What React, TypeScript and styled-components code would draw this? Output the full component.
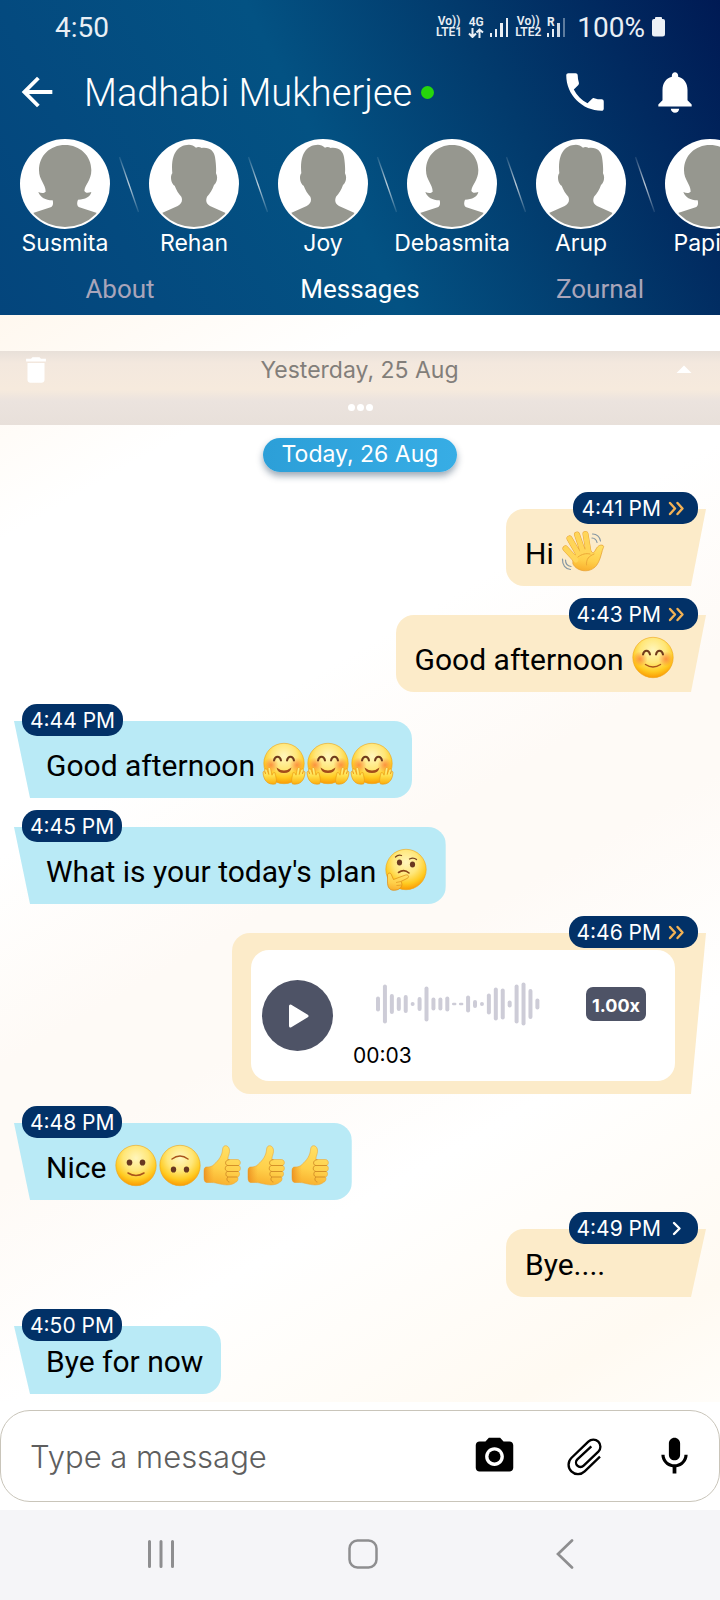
import React from "react";
import styled, { createGlobalStyle, css } from "styled-components";
import {
  MdArrowBack,
  MdArrowDropUp,
  MdDelete,
  MdNotifications,
  MdPhone,
  MdPhotoCamera,
} from "react-icons/md";

const GlobalStyle = createGlobalStyle`
  * { box-sizing: border-box; }
  body { margin: 0; background: #ffffff; font-family: Roboto, "Liberation Sans", sans-serif; }
  button { border: 0; padding: 0; background: none; color: inherit; font: inherit; cursor: pointer; }
  svg { display: block; flex: none; }
`;

const labelFont = `Inter, "Liberation Sans", sans-serif`;

/* ---------- Page ---------- */

const Page = styled.div`
  display: flex;
  flex-direction: column;
  min-height: 100vh;
  overflow-x: hidden;
`;

const Header = styled.header`
  color: #ffffff;
  background: linear-gradient(63deg, #04457c 0%, #044a7f 18%, #035283 46%, #023a6c 70%, #001a54 100%);
`;

const StatusBar = styled.div`
  display: flex;
  align-items: center;
  justify-content: space-between;
  height: 54px;
  padding: 0 54px 0 55px;
  font-size: 28px;
  color: #e9eff5;
`;

const StatusIcons = styled.div`
  display: flex;
  align-items: center;
  gap: 6px;
`;

const StatusStack = styled.span`
  display: flex;
  flex-direction: column;
  align-items: center;
  font-size: 12px;
  line-height: 11px;
  font-weight: 600;
`;

const BatteryText = styled.span`
  padding-left: 5px;
`;

const TitleBar = styled.div`
  display: flex;
  align-items: center;
  height: 76px;
  padding: 0 20px 0 14px;
`;

const ContactName = styled.h1`
  margin: 0 9px 0 24px;
  padding-top: 2px;
  font-size: 38px;
  line-height: 44px;
  font-weight: 300;
  white-space: nowrap;
`;

const OnlineDot = styled.span`
  width: 13px;
  height: 13px;
  border-radius: 50%;
  background: #26d60c;
`;

const TitleActions = styled.div`
  display: flex;
  gap: 40px;
  margin-left: auto;
`;

const IconButton = styled.button`
  display: flex;
  align-items: center;
  justify-content: center;
`;

const Contacts = styled.div`
  display: flex;
  padding: 9px 0 0 20px;
  overflow: hidden;
`;

const Contact = styled.button`
  display: flex;
  flex: none;
  flex-direction: column;
  align-items: center;
  width: 90px;
  font-family: ${labelFont};
  font-size: 23px;
  line-height: 28px;
  white-space: nowrap;
`;

const Tabs = styled.nav`
  display: grid;
  grid-template-columns: repeat(3, 1fr);
  height: 58px;
  padding-top: 6px;
`;

const Tab = styled.button<{ $active?: boolean }>`
  font-size: 26px;
  line-height: 32px;
  color: ${(p) => (p.$active ? "#ffffff" : "#a9a5ba")};
`;

/* ---------- Conversation ---------- */

const Chat = styled.main`
  flex: 1;
  padding: 36px 0 8px;
  background: linear-gradient(
    150deg,
    #fff8ef 0%,
    #ffffff 15%,
    #ffffff 36%,
    #fefaf6 50%,
    #fefaf6 58%,
    #ffffff 73%,
    #fffaf2 92%,
    #fffdf9 100%
  );
`;

const Earlier = styled.section`
  height: 74px;
  background: linear-gradient(#e8e0d9 0%, #f3e8de 16%, #f6eadd 52%, #ebe3de 68%, #e8e0da 100%);
`;

const DayToggle = styled.button`
  display: grid;
  grid-template-columns: 34px 1fr 34px;
  align-items: center;
  width: 100%;
  height: 38px;
  padding: 0 20px 0 19px;
  font-family: ${labelFont};
  font-size: 23px;
  color: #827e7a;

  svg { color: #ffffff; }
`;

const MoreDots = styled.button`
  display: flex;
  align-items: center;
  justify-content: center;
  gap: 2px;
  width: 100%;
  height: 36px;
`;

const Dot = styled.span`
  width: 7px;
  height: 7px;
  border-radius: 50%;
  background: #ffffff;
`;

const Today = styled.div`
  width: fit-content;
  height: 34px;
  margin: 13px auto 20px;
  padding: 0 19px;
  border-radius: 17px;
  background: linear-gradient(90deg, #2c9fd8, #37ade5);
  box-shadow: 0 4px 7px rgba(20, 50, 80, 0.42);
  font-family: ${labelFont};
  font-size: 23px;
  line-height: 32px;
  color: #ffffff;
`;

const Messages = styled.ol`
  display: flex;
  flex-direction: column;
  gap: 12px;
  margin: 0;
  padding: 0;
  list-style: none;
`;

const MessageRow = styled.li<{ $mine: boolean }>`
  display: flex;
  flex-direction: column;
  align-items: ${(p) => (p.$mine ? "flex-end" : "flex-start")};
`;

const Stamp = styled.div`
  position: relative;
  z-index: 1;
  display: flex;
  align-items: center;
  gap: 5px;
  height: 32px;
  margin: 0 22px -15px;
  padding: 0 8px;
  border-radius: 15px;
  background: #023167;
  font-family: ${labelFont};
  font-size: 21px;
  color: #ffffff;
`;

const mineShape = css`
  min-width: 200px;
  padding-left: 19px;
  padding-right: 31px;
  border-radius: 18px 0 0 18px;
  background: #fcebc9;
  clip-path: polygon(0 0, 100% 0, calc(100% - 15px) 100%, 0 100%);
`;

const theirsShape = css`
  padding-left: 32px;
  padding-right: 18px;
  border-radius: 0 18px 18px 0;
  background: #b9eaf6;
  clip-path: polygon(0 0, 100% 0, 100% 100%, 16px 100%);
`;

const Bubble = styled.div<{ $mine: boolean }>`
  display: flex;
  align-items: flex-end;
  margin: 0 14px;
  padding-top: 17px;
  padding-bottom: 13px;
  font-size: 30px;
  line-height: 38px;
  color: #000000;
  ${(p) => (p.$mine ? mineShape : theirsShape)}
`;

const BubbleText = styled.span`
  white-space: pre-wrap;
`;

const EmojiRun = styled.span`
  display: flex;
  padding-top: 3px;
`;

const Player = styled.div`
  display: flex;
  align-items: center;
  width: 424px;
  height: 131px;
  padding: 0 29px 0 11px;
  border-radius: 18px;
  background: #ffffff;
`;

const PlayButton = styled(IconButton)`
  flex: none;
  width: 71px;
  height: 71px;
  border-radius: 50%;
  background: #4e5366;
`;

const Track = styled.div`
  flex: 1;
  align-self: flex-start;
  padding: 32px 0 0 20px;
`;

const TrackTop = styled.div`
  display: flex;
  align-items: center;
  justify-content: space-between;
  padding-left: 22px;
`;

const Speed = styled.button`
  width: 60px;
  height: 34px;
  border-radius: 7px;
  background: #4e5366;
  font-family: ${labelFont};
  font-size: 18px;
  font-weight: 700;
  color: #ffffff;
`;

const Elapsed = styled.div`
  margin-top: 16px;
  font-family: ${labelFont};
  font-size: 21px;
  line-height: 28px;
`;

/* ---------- Composer and system navigation ---------- */

const Composer = styled.form`
  padding: 8px 0;
  background: #ffffff;
`;

const ComposerBox = styled.div`
  display: flex;
  align-items: center;
  height: 92px;
  padding: 0 22px 0 29px;
  border: 1px solid #c9c5ba;
  border-radius: 30px;
`;

const MessageInput = styled.input`
  flex: 1;
  min-width: 0;
  padding: 0;
  border: 0;
  outline: 0;
  background: none;
  font-family: ${labelFont};
  font-size: 31px;
  font-weight: 300;
  color: #000000;

  &::placeholder { color: #5e5e5e; opacity: 1; }
`;

const ComposerActions = styled.div`
  display: flex;
  gap: 45px;
`;

const SystemNav = styled.nav`
  display: grid;
  grid-template-columns: repeat(3, 1fr);
  height: 90px;
  padding: 0 54px 2px 60px;
  background: #f5f5f8;
`;

/* ---------- Drawings ---------- */

const Signal = ({ weak }: { weak?: boolean }) => (
  <svg width="19" height="22" viewBox="0 0 19 22" fill="#e9eff5" aria-hidden="true">
    <rect x="0" y="17" width="2" height="4" />
    <rect x="5" y="13" width="2" height="8" />
    <rect x="10" y="7" width="3" height="14" opacity={weak ? 0.9 : 1} />
    <rect x="16" y="2" width="2" height="19" opacity={weak ? 0.4 : 1} />
    {weak && (
      <text x="0" y="10" fontSize="12" fontWeight="700">
        R
      </text>
    )}
  </svg>
);

const DataArrows = () => (
  <svg width="16" height="10" viewBox="0 0 16 10" fill="none" stroke="#e9eff5" strokeWidth="2" aria-hidden="true">
    <path d="M4.500 0V8.500M1 5.500l3.500 3.500L8 5.500M11.500 10V1.500M8.500 4.500l3-3 3.500 3" />
  </svg>
);

const Battery = () => (
  <svg width="15" height="20" viewBox="0 0 15 20" fill="#edf1f6" aria-hidden="true">
    <path d="M4 2V1a1 1 0 0 1 1-1h5a1 1 0 0 1 1 1v1h1a2 2 0 0 1 2 2v13a2.500 2.500 0 0 1-2.500 2.500h-8A2.500 2.500 0 0 1 1 17V4a2 2 0 0 1 2-2z" />
  </svg>
);

const silhouettes = {
  woman:
    "M135 18c45 0 79 32 79 76 0 29-18 42-21 61 4 9 12 6 21 4-3 14-18 23-40 23-5 13-2 20 4 23l53 17v60H39v-60l53-17c6-3 9-10 6-21-22 0-37-9-43-25 8 3 16 5 22-1 0-22-20-35-20-64 0-44 33-76 78-76z",
  man:
    "M108 19c14-4 24-1 33 7 5-3 12-2 17 1 24-3 37 9 40 27 3 19 4 34 3 49 7 12 2 30-6 35-5 16-12 25-21 35-5 13-2 22 9 28l47 21v61H39v-61l47-21c11-6 16-16 11-28-9-10-15-20-20-33-10-5-15-28-7-37-2-20-1-38 4-52 6-16 17-28 34-32z",
};

const Avatar = ({ kind }: { kind: keyof typeof silhouettes }) => (
  <svg width="90" height="90" viewBox="0 0 270 270" aria-hidden="true">
    <clipPath id={`ring-${kind}`}>
      <circle cx="135" cy="135" r="129" />
    </clipPath>
    <circle cx="135" cy="135" r="135" fill="#ffffff" />
    <path d={silhouettes[kind]} fill="#96978f" clipPath={`url(#ring-${kind})`} />
  </svg>
);

const Slash = () => (
  <svg width="39" height="90" viewBox="0 0 39 90" aria-hidden="true">
    <defs>
      <linearGradient id="slash" x1="0" y1="0" x2="0" y2="1">
        <stop offset="0" stopColor="#ffffff" stopOpacity="0.1" />
        <stop offset="0.5" stopColor="#ffffff" stopOpacity="0.75" />
        <stop offset="1" stopColor="#ffffff" stopOpacity="0.1" />
      </linearGradient>
    </defs>
    <path d="M9.500 18 28.500 73" stroke="url(#slash)" strokeWidth="1.300" />
  </svg>
);

const ReadTicks = ({ read }: { read: boolean }) => (
  <svg width="24" height="16" viewBox="0 0 24 16" fill="none" strokeWidth="2.400" strokeLinecap="round" strokeLinejoin="round" aria-hidden="true">
    {read ? (
      <path d="m4 3 5 5.500-5 5.500M11.500 3l5 5.500-5 5.500" stroke="#f3b255" />
    ) : (
      <path d="m8 3 5.500 5.500-5.500 5.500" stroke="#ffffff" />
    )}
  </svg>
);

const bars = [15, 39, 20, 14, 18, 4, 14, 35, 13, 13, 15, 2, 2, 17, 8, 4, 21, 33, 31, 7, 39, 43, 30, 11];

const Waveform = () => (
  <svg width="166" height="44" viewBox="0 0 166 44" stroke="#cdccd7" aria-hidden="true">
    {bars.map((h, i) => {
      const x = 3 + i * 6.93;
      return h === 2 ? (
        <path key={i} d={`M${x - 1} 22h2`} strokeWidth="2.400" strokeLinecap="round" />
      ) : (
        <path key={i} d={`M${x} ${22 - h / 2 + 2}v${h - 4 + 0.01}`} strokeWidth="4" strokeLinecap="round" />
      );
    })}
  </svg>
);

const Paperclip = () => (
  <svg width="45" height="45" viewBox="0 0 135 135" fill="none" stroke="#000000" strokeWidth="7" aria-hidden="true">
    <path d="M114 68 68 112a28 28 0 0 1-40-40L79 23a21 21 0 0 1 30 30L65 95a13 13 0 0 1-19-19L88 37" />
  </svg>
);

const Microphone = () => (
  <svg width="45" height="45" viewBox="0 0 24 24" aria-hidden="true">
    <path d="M12 14c1.660 0 2.990-1.340 2.990-3L15 5c0-1.660-1.340-3-3-3S9 3.340 9 5v6c0 1.660 1.340 3 3 3zm5.300-3c0 3-2.540 5.100-5.300 5.100S6.700 14 6.700 11H5c0 3.410 2.720 6.230 6 6.720V21h2v-3.280c3.280-.48 6-3.300 6-6.720h-1.700z" />
  </svg>
);

/* ---------- Emoji ---------- */

type EmojiName = "wave" | "blush" | "hug" | "think" | "smile" | "flipped" | "thumb";

const emojiGlyph: Record<EmojiName, string> = {
  wave: "👋",
  blush: "😊",
  hug: "🤗",
  think: "🤔",
  smile: "🙂",
  flipped: "🙃",
  thumb: "👍",
};

const EmojiPaints = () => (
  <svg width="0" height="0" aria-hidden="true">
    <defs>
      <radialGradient id="face" cx="0.5" cy="0.32" r="0.7">
        <stop offset="0" stopColor="#fff6bd" />
        <stop offset="0.45" stopColor="#ffe779" />
        <stop offset="0.75" stopColor="#ffcb21" />
        <stop offset="1" stopColor="#fa9500" />
      </radialGradient>
      <linearGradient id="palm" x1="0" y1="0" x2="0" y2="1">
        <stop offset="0" stopColor="#fff08f" />
        <stop offset="0.5" stopColor="#ffdf4a" />
        <stop offset="1" stopColor="#fcae0c" />
      </linearGradient>
      <radialGradient id="cheek">
        <stop offset="0" stopColor="#fb7a35" stopOpacity="0.75" />
        <stop offset="1" stopColor="#fb7a35" stopOpacity="0" />
      </radialGradient>
      <linearGradient id="skin" x1="0.6" y1="0" x2="0.4" y2="1">
        <stop offset="0" stopColor="#ffe066" />
        <stop offset="0.6" stopColor="#ffd04a" />
        <stop offset="1" stopColor="#f9b02e" />
      </linearGradient>
      <linearGradient id="wrist" x1="0" y1="0" x2="1" y2="0">
        <stop offset="0" stopColor="#e98a1c" stopOpacity="0.8" />
        <stop offset="1" stopColor="#f4a02c" stopOpacity="0" />
      </linearGradient>
    </defs>
  </svg>
);

const Disc = () => <circle cx="22" cy="22.500" r="20.200" fill="url(#face)" stroke="#efa41a" strokeWidth="0.600" />;

const Cheeks = () => (
  <>
    <circle cx="9" cy="24" r="7.500" fill="url(#cheek)" />
    <circle cx="35" cy="24" r="7.500" fill="url(#cheek)" />
  </>
);

const HappyEyes = () => (
  <path
    d="M12 19.500c1-5 6-5 7 0M25 19.500c1-5 6-5 7 0"
    fill="none"
    stroke="#6f3a1b"
    strokeWidth="2"
    strokeLinecap="round"
  />
);

const HugHand = () => (
  <path
    d="M13.500 43C6 44 1.500 40 1 31c1-1.500 2-.5 2.600 2L2.500 29c1-2 2.300-1 2.800.5l1.500 4-.8-6c1-1.800 2.300-.8 2.700.7l1.300 6c.5-2 1.500-3 3-2.500.5 4 2.500 7 .5 11.300z"
    fill="url(#palm)"
    stroke="#eb9c18"
    strokeWidth="0.700"
    strokeLinejoin="round"
  />
);

const emojiArt: Record<EmojiName, React.ReactNode> = {
  blush: (
    <>
      <Disc />
      <Cheeks />
      <HappyEyes />
      <path d="M14.500 29.500q7.500 5 15 0" fill="none" stroke="#a9531a" strokeWidth="1.500" strokeLinecap="round" />
    </>
  ),
  hug: (
    <>
      <Disc />
      <Cheeks />
      <HappyEyes />
      <path d="M14.500 26.500q7.500 6 15 0-1 5.500-7.500 5.500t-7.500-5.500z" fill="#a34c1a" />
      <HugHand />
      <g transform="matrix(-1 0 0 1 44 0)">
        <HugHand />
      </g>
    </>
  ),
  smile: (
    <>
      <Disc />
      <ellipse cx="15.500" cy="19.500" rx="2.800" ry="3.100" fill="#683820" />
      <ellipse cx="28.500" cy="19.500" rx="2.800" ry="3.100" fill="#683820" />
      <path d="M14 30q8 5 16 0" fill="none" stroke="#a9531a" strokeWidth="1.500" strokeLinecap="round" />
    </>
  ),
  flipped: (
    <>
      <Disc />
      <ellipse cx="15.500" cy="26.500" rx="2.700" ry="3.100" fill="#683820" />
      <ellipse cx="28.500" cy="26.500" rx="2.700" ry="3.100" fill="#683820" />
      <path d="M14 16q8-6 16 0" fill="none" stroke="#a9531a" strokeWidth="1.500" strokeLinecap="round" />
    </>
  ),
  think: (
    <>
      <Disc />
      <ellipse cx="15.500" cy="15.500" rx="2.600" ry="3" fill="#683820" />
      <ellipse cx="28.500" cy="17.500" rx="2.600" ry="3" fill="#683820" />
      <path d="M11.500 10q2.500-2.500 6-1.500M25.500 12q4-2 7 .5" fill="none" stroke="#7a4420" strokeWidth="1.300" strokeLinecap="round" />
      <path d="M14.500 25.500q5.500-4 10.500.5" fill="none" stroke="#8a4518" strokeWidth="1.600" strokeLinecap="round" />
      <path
        d="M3.500 28c.5-2.500 3.300-2.500 4 0l2 4.500 12-4.500c3-.8 4.200 2 1.700 3.400l-6.200 3c2.500 4-.5 8.600-6.500 8.900-5 .2-7-3-7-8.300z"
        fill="url(#skin)"
        stroke="#dc8a14"
        strokeWidth="0.700"
        strokeLinejoin="round"
      />
      <path d="M12 35.500l5-1M12.500 38.500l5-.5" stroke="#e39a22" strokeWidth="0.800" />
    </>
  ),
  thumb: (
    <>
      <path
        d="M20.500 7c.2-3.500 2-5 4.500-4 2.500 1.200 3 4.500 2.200 7.500-.6 2.500-1.400 3.500-1.200 6h9.500c3.200.3 3.800 4.500 1.300 6 2.300 1.200 2 5-.3 5.900 1.800 1.500 1.200 5-1 5.700 1.200 1.700.2 4.700-2 5.200-3 2.800-9 3.200-15 1.800-4-1-6-1.600-9-1.600H5c-2 0-3-2-3-5v-6c0-3.500 1-4.500 3-4.500 3 0 5-.5 7-2.500 5-4.500 8-9 8.500-14.500z"
        fill="url(#skin)"
        stroke="#eda93a"
        strokeWidth="0.600"
      />
      <path d="M2 28.500c0-3.500 1-4.500 3-4.500 3 0 5-.5 7-2.500V40c-3-.7-4-.5-7-.5-2 0-3-2-3-5z" fill="url(#wrist)" />
      <path
        d="M27 16.700c-4 0-4.500 5-1.500 5.700-3 1-3 5.300 0 6-2.500 1-2 5 .5 5.600-2 1.200-1 4.700 1 5M25.500 22.500h11M25.500 28.500h10.500M26 34h9"
        fill="none"
        stroke="#d08a25"
        strokeWidth="0.900"
        strokeLinecap="round"
      />
    </>
  ),
  wave: (
    <>
      <g fill="none" strokeLinecap="round" strokeLinejoin="round">
        <path d="M4.500 19.500 15 31M8.500 9.500 18 26M16 5.500 22 23M24.500 5l3 18" stroke="#e8a437" strokeWidth="6" />
        <path
          d="M12 29C14 24 26 16 30 22c1.500 2.500 3 2 4.500-1 1.500-3 4-6 7.500-4.500 1.500.8 0 2.500-.7 5-1.300 5-2.800 11-5.800 15C29 44.500 16 43 12 35z"
          fill="url(#skin)"
          stroke="#e8a437"
          strokeWidth="0.800"
        />
        <path d="M4.500 19.500 15 31M8.500 9.500 18 26M16 5.500 22 23M24.500 5l3 18" stroke="#ffd558" strokeWidth="5" />
        <path d="M17 28c4-3 8-4 12-3M25.500 36c-.5-6 2.500-9 7.500-11" stroke="#eda936" strokeWidth="1" />
        <path d="M31.500 5c4-.2 7.500 3 8 7M31 9c2.500.2 4.500 2 5 4.500M1.500 30c-.3 6 3 10 8 10.500M4.500 31c0 4 2 6 5.500 6.500" stroke="#8798a3" strokeWidth="1.200" />
      </g>
    </>
  ),
};

const Emoji = ({ name }: { name: EmojiName }) => (
  <svg width="44" height="44" viewBox="0 0 44 44" role="img" aria-label={emojiGlyph[name]}>
    {emojiArt[name]}
  </svg>
);

/* ---------- Data ---------- */

const contacts: { name: string; kind: keyof typeof silhouettes }[] = [
  { name: "Susmita", kind: "woman" },
  { name: "Rehan", kind: "man" },
  { name: "Joy", kind: "man" },
  { name: "Debasmita", kind: "woman" },
  { name: "Arup", kind: "man" },
  { name: "Papiya", kind: "woman" },
];

type Message = {
  time: string;
  mine?: boolean;
  read?: boolean;
  text?: string;
  emoji?: EmojiName[];
  audio?: string;
};

const messages: Message[] = [
  { time: "4:41 PM", mine: true, read: true, text: "Hi ", emoji: ["wave"] },
  { time: "4:43 PM", mine: true, read: true, text: "Good afternoon ", emoji: ["blush"] },
  { time: "4:44 PM", text: "Good afternoon ", emoji: ["hug", "hug", "hug"] },
  { time: "4:45 PM", text: "What is your today's plan ", emoji: ["think"] },
  { time: "4:46 PM", mine: true, read: true, audio: "00:03" },
  { time: "4:48 PM", text: "Nice ", emoji: ["smile", "flipped", "thumb", "thumb", "thumb"] },
  { time: "4:49 PM", mine: true, read: false, text: "Bye...." },
  { time: "4:50 PM", text: "Bye for now" },
];

const AudioPlayer = ({ elapsed }: { elapsed: string }) => (
  <Player>
    <PlayButton aria-label="Play voice message">
      <svg width="24" height="26" viewBox="0 0 24 26" fill="#ffffff" stroke="#ffffff" strokeWidth="3" strokeLinejoin="round">
        <path d="M4.500 3v20L21 13z" />
      </svg>
    </PlayButton>
    <Track>
      <TrackTop>
        <Waveform />
        <Speed>1.00x</Speed>
      </TrackTop>
      <Elapsed>{elapsed}</Elapsed>
    </Track>
  </Player>
);

const MessageItem = ({ time, mine = false, read = false, text, emoji, audio }: Message) => (
  <MessageRow $mine={mine}>
    <Stamp>
      <time>{time}</time>
      {mine && <ReadTicks read={read} />}
    </Stamp>
    <Bubble $mine={mine}>
      {audio && <AudioPlayer elapsed={audio} />}
      {text && <BubbleText>{text}</BubbleText>}
      {emoji && (
        <EmojiRun>
          {emoji.map((name, i) => (
            <Emoji key={i} name={name} />
          ))}
        </EmojiRun>
      )}
    </Bubble>
  </MessageRow>
);

export default function App() {
  return (
    <Page>
      <GlobalStyle />
      <Header>
        <StatusBar>
          <time>4:50</time>
          <StatusIcons>
            <StatusStack>
              <span>Vo))</span>
              <span>LTE1</span>
            </StatusStack>
            <StatusStack>
              <span>4G</span>
              <DataArrows />
            </StatusStack>
            <Signal />
            <StatusStack>
              <span>Vo))</span>
              <span>LTE2</span>
            </StatusStack>
            <Signal weak />
            <BatteryText>100%</BatteryText>
            <Battery />
          </StatusIcons>
        </StatusBar>
        <TitleBar>
          <IconButton aria-label="Back">
            <MdArrowBack size={46} />
          </IconButton>
          <ContactName>Madhabi Mukherjee</ContactName>
          <OnlineDot />
          <TitleActions>
            <IconButton aria-label="Call">
              <MdPhone size={50} />
            </IconButton>
            <IconButton aria-label="Notifications">
              <MdNotifications size={50} />
            </IconButton>
          </TitleActions>
        </TitleBar>
        <Contacts>
          {contacts.map(({ name, kind }, i) => (
            <React.Fragment key={name}>
              {i > 0 && <Slash />}
              <Contact>
                <Avatar kind={kind} />
                {name}
              </Contact>
            </React.Fragment>
          ))}
        </Contacts>
        <Tabs>
          <Tab>About</Tab>
          <Tab $active>Messages</Tab>
          <Tab>Zournal</Tab>
        </Tabs>
      </Header>

      <Chat>
        <EmojiPaints />
        <Earlier>
          <DayToggle>
            <MdDelete size={34} />
            <span>Yesterday, 25 Aug</span>
            <MdArrowDropUp size={36} />
          </DayToggle>
          <MoreDots aria-label="Show more">
            <Dot />
            <Dot />
            <Dot />
          </MoreDots>
        </Earlier>
        <Today>Today, 26 Aug</Today>
        <Messages>
          {messages.map((m) => (
            <MessageItem key={m.time} {...m} />
          ))}
        </Messages>
      </Chat>

      <Composer>
        <ComposerBox>
          <MessageInput aria-label="Message" placeholder="Type a message" />
          <ComposerActions>
            <IconButton type="button" aria-label="Camera">
              <MdPhotoCamera size={45} />
            </IconButton>
            <IconButton type="button" aria-label="Attach a file">
              <Paperclip />
            </IconButton>
            <IconButton type="button" aria-label="Record audio">
              <Microphone />
            </IconButton>
          </ComposerActions>
        </ComposerBox>
      </Composer>

      <SystemNav>
        <IconButton aria-label="Recent apps">
          <svg width="28" height="30" viewBox="0 0 28 30" stroke="#8e8e90" strokeWidth="3" strokeLinecap="round">
            <path d="M2.500 2.500v25M14 2.500v25M25.500 2.500v25" />
          </svg>
        </IconButton>
        <IconButton aria-label="Home">
          <svg width="30" height="30" viewBox="0 0 30 30" fill="none" stroke="#8e8e90" strokeWidth="2.500">
            <rect x="1.500" y="1.500" width="27" height="27" rx="8" />
          </svg>
        </IconButton>
        <IconButton aria-label="Go back">
          <svg width="18" height="30" viewBox="0 0 18 30" fill="none" stroke="#8e8e90" strokeWidth="2.700" strokeLinecap="round">
            <path d="M16 1.500 2 15l14 13.500" />
          </svg>
        </IconButton>
      </SystemNav>
    </Page>
  );
}
